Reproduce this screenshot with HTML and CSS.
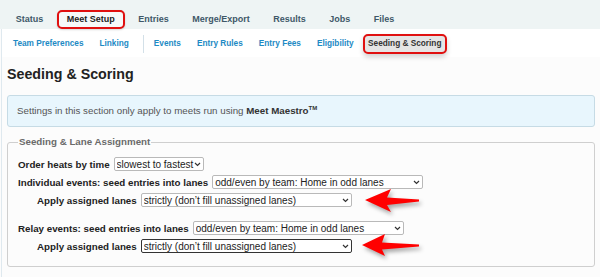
FILE: index.html
```html
<!DOCTYPE html>
<html lang="en">
<head>
<meta charset="utf-8">
<title>Seeding &amp; Scoring</title>
<link rel="stylesheet" href="styles.css">
</head>
<body>
<nav class="tabs">
  <a class="tab">Status</a>
  <a class="tab tab-active">Meet Setup</a>
  <a class="tab">Entries</a>
  <a class="tab">Merge/Export</a>
  <a class="tab">Results</a>
  <a class="tab">Jobs</a>
  <a class="tab">Files</a>
</nav>
<div class="page">
  <nav class="subnav">
    <a class="sublink">Team Preferences</a>
    <a class="sublink">Linking</a>
    <span class="subsep"></span>
    <a class="sublink">Events</a>
    <a class="sublink">Entry Rules</a>
    <a class="sublink">Entry Fees</a>
    <a class="sublink">Eligibility</a>
    <a class="sublink sublink-active">Seeding &amp; Scoring</a>
  </nav>
  <main class="content">
    <h1 class="title">Seeding &amp; Scoring</h1>
    <div class="info">Settings in this section only apply to meets run using <b class="brand">Meet Maestro<sup class="tm">TM</sup></b></div>
    <fieldset class="group">
      <legend class="legend">Seeding &amp; Lane Assignment</legend>
      <div class="row">
        <label class="lbl">Order heats by time</label>
        <span class="selwrap">
          <select class="sel sel-short"><option>slowest to fastest</option></select>
          <svg class="chev" width="7" height="5" viewBox="0 0 7 5"><path d="M1 1 L3.5 3.5 L6 1" fill="none" stroke="#333" stroke-width="1.2"/></svg>
        </span>
      </div>
      <div class="row">
        <label class="lbl">Individual events: seed entries into lanes</label>
        <span class="selwrap">
          <select class="sel sel-long"><option>odd/even by team: Home in odd lanes</option></select>
          <svg class="chev" width="7" height="5" viewBox="0 0 7 5"><path d="M1 1 L3.5 3.5 L6 1" fill="none" stroke="#333" stroke-width="1.2"/></svg>
        </span>
      </div>
      <div class="row row-sub">
        <label class="lbl">Apply assigned lanes</label>
        <span class="selwrap">
          <select class="sel sel-long"><option>strictly (don’t fill unassigned lanes)</option></select>
          <svg class="chev" width="7" height="5" viewBox="0 0 7 5"><path d="M1 1 L3.5 3.5 L6 1" fill="none" stroke="#333" stroke-width="1.2"/></svg>
        </span>
        <svg class="arrow arrow-one" width="62" height="30" viewBox="0 0 62 30"><polygon points="2,13 28,2 24,10.5 56,12.5 56,14.5 24,18 28,25" fill="#f00"/></svg>
      </div>
      <div class="row row-gap">
        <label class="lbl">Relay events: seed entries into lanes</label>
        <span class="selwrap">
          <select class="sel sel-long"><option>odd/even by team: Home in odd lanes</option></select>
          <svg class="chev" width="7" height="5" viewBox="0 0 7 5"><path d="M1 1 L3.5 3.5 L6 1" fill="none" stroke="#333" stroke-width="1.2"/></svg>
        </span>
      </div>
      <div class="row row-sub">
        <label class="lbl">Apply assigned lanes</label>
        <span class="selwrap">
          <select class="sel sel-long sel-focus"><option>strictly (don’t fill unassigned lanes)</option></select>
          <svg class="chev" width="7" height="5" viewBox="0 0 7 5"><path d="M1 1 L3.5 3.5 L6 1" fill="none" stroke="#333" stroke-width="1.2"/></svg>
        </span>
        <svg class="arrow arrow-two" width="64" height="30" viewBox="0 0 64 30"><polygon points="2,13 25,2 22,10.5 59,12.5 59,14.5 22,17.5 25,24" fill="#f00"/></svg>
      </div>
    </fieldset>
  </main>
</div>
</body>
</html>
```
FILE: styles.css
```css
html, body {
  margin: 0;
  padding: 0;
}
body {
  background: #fcfcfc;
  font-family: "Liberation Sans", Arial, sans-serif;
  color: #222;
  width: 600px;
  height: 277px;
  overflow: hidden;
}
.tabs {
  display: flex;
  align-items: flex-end;
  height: 29px;
  padding-left: 4px;
  background: #eef4f4;
  box-sizing: border-box;
}
.tab {
  font-size: 9px;
  font-weight: bold;
  color: #3e5868;
  line-height: 15px;
  padding: 0 9.75px 2px 9.75px;
  border: 2px solid transparent;
  border-bottom: 0;
}
.tab-active {
  color: #222;
  background: #f6f9f9;
  border: 2px solid #e01010;
  border-radius: 5px;
  padding: 0 7.75px;
  margin: 0 2px;
  box-shadow: 0 1px 2px rgba(0,0,0,0.15);
}
.page {
  margin-left: 1px;
  border-left: 1px solid #dfe9ef;
  min-height: 248px;
}
.subnav {
  display: flex;
  align-items: center;
  height: 28px;
  box-sizing: border-box;
  padding: 1.5px 0 0 11px;
  background: #fff;
}
.sublink {
  font-size: 8.25px;
  font-weight: bold;
  color: #1d8ac4;
  margin-right: 16px;
  line-height: 16px;
}
.subsep {
  width: 1px;
  height: 18px;
  background: #d3e0e8;
  margin: 0 10px 0 -2px;
}
.sublink-active {
  color: #333;
  background: #e5e5e5;
  border: 2px solid #e01010;
  border-radius: 5px;
  padding: 0 3.5px;
  margin-left: -7px;
  box-shadow: 0 3px 5px rgba(0,0,0,0.18);
}
.content {
  padding: 0 5px;
}
.title {
  margin: 8.5px 0 0 0;
  font-size: 14.25px;
  line-height: 17px;
  font-weight: bold;
  color: #222;
}
.info {
  margin-top: 12px;
  height: 32px;
  box-sizing: border-box;
  border: 1px solid #c6dbe5;
  border-radius: 3px;
  background: #e8f6fd;
  padding: 0 9px;
  font-size: 9.75px;
  line-height: 30px;
  color: #555;
}
.brand {
  color: #333;
}
.tm {
  font-size: 6px;
  vertical-align: 4px;
  line-height: 0;
}
.group {
  margin: 9.5px 0 0 0;
  border: 1px solid #cfcfcf;
  border-radius: 3px;
  padding: 7px 10px 11px 10px;
  min-width: 0;
}
.legend {
  padding: 0 1px;
  font-size: 9.75px;
  font-weight: bold;
  line-height: 12px;
  color: #6a6a6a;
}
.row {
  position: relative;
  display: flex;
  align-items: center;
  gap: 4px;
  height: 18px;
}
.row-sub {
  padding-left: 19px;
}
.row-gap {
  margin-top: 10px;
}
.lbl {
  font-size: 9.75px;
  font-weight: bold;
  color: #222;
  white-space: nowrap;
}
.selwrap {
  position: relative;
  display: inline-flex;
}
.sel {
  appearance: none;
  -webkit-appearance: none;
  height: 14px;
  font-family: "Liberation Sans", Arial, sans-serif;
  font-size: 10px;
  color: #222;
  background: #fff;
  border: 1px solid #b9b9b9;
  border-radius: 2px;
  padding: 0 8px 0 2px;
  box-sizing: border-box;
  margin: 0;
}
.chev {
  position: absolute;
  right: 3px;
  top: 5px;
  pointer-events: none;
}
.sel-short {
  width: 90px;
}
.sel-long {
  width: 211px;
}
.sel-focus {
  border-color: #333;
}
.arrow {
  position: absolute;
  filter: drop-shadow(2px 3px 2px rgba(0,0,0,0.35));
}
.arrow-one {
  left: 345px;
  top: -4.5px;
}
.arrow-two {
  left: 342px;
  top: -5.5px;
}
```
